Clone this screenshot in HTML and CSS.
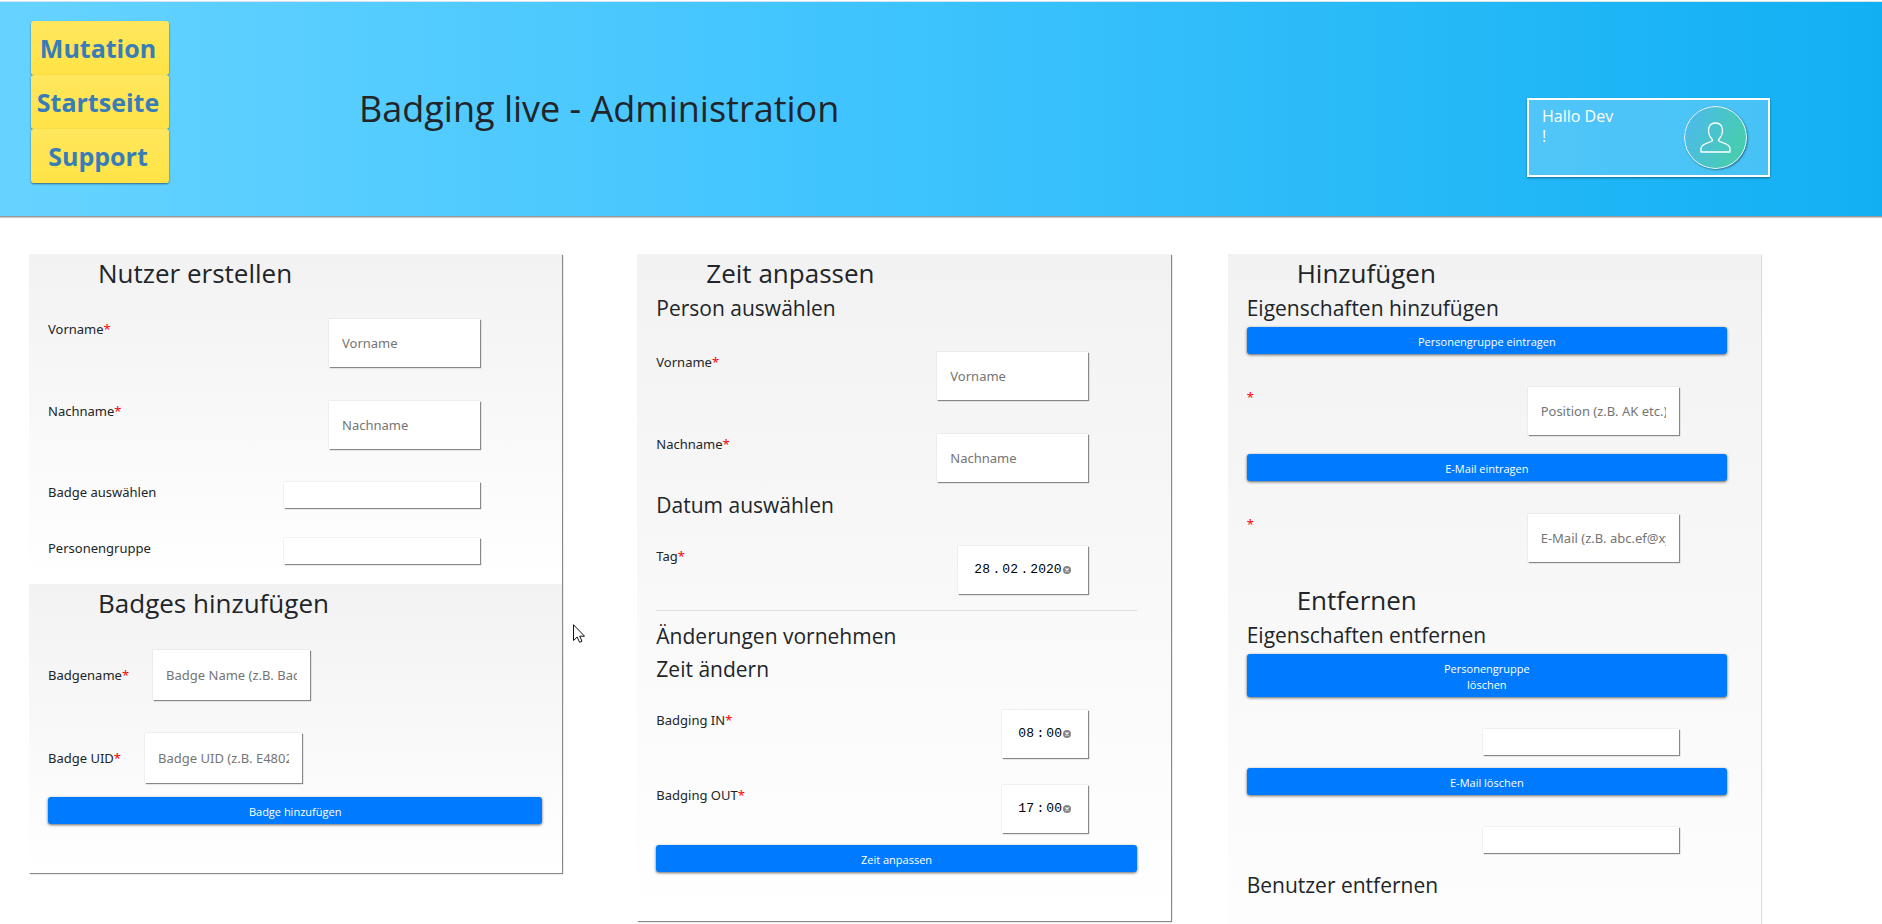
FILE: index.html
```html
<!DOCTYPE html>
<html lang="de">
<head>
<meta charset="utf-8">
<meta name="viewport" content="width=device-width, initial-scale=1">
<title>Badging live - Administration</title>
<link rel="stylesheet" href="styles.css">
</head>
<body>
<header class="header">
  <nav class="nav">
    <a class="nav-link" href="#mutation">Mutation</a>
    <a class="nav-link" href="#start">Startseite</a>
    <a class="nav-link" href="#support">Support</a>
  </nav>
  <h1 class="page-title">Badging live - Administration</h1>
  <div class="user">
    <p class="user-greeting">Hallo Dev !</p>
    <svg class="user-avatar" viewBox="0 0 63 63" aria-hidden="true">
      <defs>
        <linearGradient id="avatar-fill" x1="0" y1="0.3" x2="1" y2="0.7">
          <stop offset="0" stop-color="#4dbaea"/>
          <stop offset="1" stop-color="#46cfa8"/>
        </linearGradient>
      </defs>
      <circle cx="31.5" cy="31.5" r="31" fill="url(#avatar-fill)" stroke="#fff" stroke-width="1"/>
      <path d="M28.500 34.500C28.500 32.500 24.500 31 24.500 25C24.500 20 27 17 31.500 17C36 17 38.500 20 38.500 25C38.500 31 34.500 32.500 34.500 34.500C34.500 36.500 46 36.500 46 42.500V46H17V42.500C17 36.500 28.500 36.500 28.500 34.500Z" fill="none" stroke="#fff" stroke-width="1.300" stroke-linejoin="round"/>
    </svg>
  </div>
</header>

<main class="board">
  <div class="column">
    <form class="card card-create">
      <h2 class="card-title">Nutzer erstellen</h2>
      <div class="field">
        <label for="new-first">Vorname<span class="required">*</span></label>
        <input class="text-input" id="new-first" type="text" placeholder="Vorname">
      </div>
      <div class="field">
        <label for="new-last">Nachname<span class="required">*</span></label>
        <input class="text-input" id="new-last" type="text" placeholder="Nachname">
      </div>
      <div class="field field-select">
        <label for="new-badge">Badge auswählen</label>
        <select class="select" id="new-badge"></select>
      </div>
      <div class="field field-select">
        <label for="new-group">Personengruppe</label>
        <select class="select" id="new-group"></select>
      </div>
    </form>
    <form class="card card-badges">
      <h2 class="card-title">Badges hinzufügen</h2>
      <div class="field field-inline">
        <label for="badge-name">Badgename<span class="required">*</span></label>
        <input class="text-input" id="badge-name" type="text" placeholder="Badge Name (z.B. Badge 12)">
      </div>
      <div class="field field-inline">
        <label for="badge-uid">Badge UID<span class="required">*</span></label>
        <input class="text-input" id="badge-uid" type="text" placeholder="Badge UID (z.B. E4802F)">
      </div>
      <button class="button" type="button">Badge hinzufügen</button>
    </form>
  </div>

  <form class="card card-time">
    <h2 class="card-title">Zeit anpassen</h2>
    <h3 class="section-title">Person auswählen</h3>
    <div class="field">
      <label for="time-first">Vorname<span class="required">*</span></label>
      <input class="text-input" id="time-first" type="text" placeholder="Vorname">
    </div>
    <div class="field">
      <label for="time-last">Nachname<span class="required">*</span></label>
      <input class="text-input" id="time-last" type="text" placeholder="Nachname">
    </div>
    <h3 class="section-title">Datum auswählen</h3>
    <div class="field field-time">
      <label for="day">Tag<span class="required">*</span></label>
      <div class="segments">
        <input class="segment" id="day" type="text" inputmode="numeric" value="28"><span class="separator">.</span><input class="segment" type="text" inputmode="numeric" aria-label="Monat" value="02"><span class="separator">.</span><input class="segment segment-year" type="text" inputmode="numeric" aria-label="Jahr" value="2020">
        <button class="clear" type="button" aria-label="Datum löschen"><svg viewBox="0 0 8 8"><circle cx="4" cy="4" r="4" fill="#858585"/><path d="M2.500 2.500L5.500 5.500M5.500 2.500L2.500 5.500" stroke="#fff" stroke-width="1.200"/></svg></button>
      </div>
    </div>
    <hr class="divider">
    <h3 class="section-title">Änderungen vornehmen</h3>
    <h3 class="section-title">Zeit ändern</h3>
    <div class="field field-time">
      <label for="in-hour">Badging IN<span class="required">*</span></label>
      <div class="segments">
        <input class="segment" id="in-hour" type="text" inputmode="numeric" value="08"><span class="separator">:</span><input class="segment" type="text" inputmode="numeric" aria-label="Minute IN" value="00">
        <button class="clear" type="button" aria-label="Zeit IN löschen"><svg viewBox="0 0 8 8"><circle cx="4" cy="4" r="4" fill="#858585"/><path d="M2.500 2.500L5.500 5.500M5.500 2.500L2.500 5.500" stroke="#fff" stroke-width="1.200"/></svg></button>
      </div>
    </div>
    <div class="field field-time">
      <label for="out-hour">Badging OUT<span class="required">*</span></label>
      <div class="segments">
        <input class="segment" id="out-hour" type="text" inputmode="numeric" value="17"><span class="separator">:</span><input class="segment" type="text" inputmode="numeric" aria-label="Minute OUT" value="00">
        <button class="clear" type="button" aria-label="Zeit OUT löschen"><svg viewBox="0 0 8 8"><circle cx="4" cy="4" r="4" fill="#858585"/><path d="M2.500 2.500L5.500 5.500M5.500 2.500L2.500 5.500" stroke="#fff" stroke-width="1.200"/></svg></button>
      </div>
    </div>
    <button class="button" type="button">Zeit anpassen</button>
  </form>

  <form class="card card-manage">
    <h2 class="card-title">Hinzufügen</h2>
    <h3 class="section-title">Eigenschaften hinzufügen</h3>
    <button class="button" type="button">Personengruppe eintragen</button>
    <div class="field">
      <label for="add-group"><span class="required">*</span></label>
      <input class="text-input" id="add-group" type="text" placeholder="Position (z.B. AK etc.)">
    </div>
    <button class="button" type="button">E-Mail eintragen</button>
    <div class="field">
      <label for="add-mail"><span class="required">*</span></label>
      <input class="text-input" id="add-mail" type="text" placeholder="E-Mail (z.B. abc.ef@xyz.ch)">
    </div>
    <h2 class="card-title">Entfernen</h2>
    <h3 class="section-title">Eigenschaften entfernen</h3>
    <button class="button" type="button">Personengruppe<br>löschen</button>
    <div class="field field-select">
      <select class="select" aria-label="Personengruppe löschen"></select>
    </div>
    <button class="button" type="button">E-Mail löschen</button>
    <div class="field field-select">
      <select class="select" aria-label="E-Mail löschen"></select>
    </div>
    <h3 class="section-title">Benutzer entfernen</h3>
  </form>
</main>

<svg class="pointer" viewBox="0 0 12 19" aria-hidden="true">
  <path d="M0.500 0.700V16.500L4.200 13L6.600 18.300L9 17.200L6.700 12.200H11.500Z" fill="#fff" stroke="#111" stroke-width="1"/>
</svg>
</body>
</html>
```
FILE: styles.css
```css
* {
  box-sizing: border-box;
}

body {
  margin: 0;
  background: #fff;
  color: #212529;
  font-family: "Noto Sans", "Open Sans", sans-serif;
  font-size: 13px;
  line-height: 20px;
}

h1,
h2,
h3,
p {
  margin: 0;
  font-weight: 400;
}

h1,
h2,
h3,
.nav-link,
.user-greeting {
  font-family: "Open Sans", "Noto Sans", sans-serif;
}

input,
select,
button {
  margin: 0;
  border: 0;
  border-radius: 0;
  font: inherit;
}

.header {
  display: flex;
  align-items: flex-start;
  margin-top: 1px;
  padding: 19px 112px 33px 31px;
  border-top: 1px solid #d5e4ea;
  border-bottom: 1px solid #999;
  background: linear-gradient(90deg, #66d3ff, #40c4fe 45%, #12b0f3);
  box-shadow: 0 1px 1px #ccc;
}

.nav {
  display: flex;
  flex-direction: column;
  width: 138px;
}

.nav-link {
  padding-right: 4px;
  border-radius: 3px;
  background: linear-gradient(#ffe75e, #ffe345);
  box-shadow: 0 1px 2px rgba(0, 0, 0, 0.5);
  color: #387cb8;
  font-size: 25px;
  font-weight: 700;
  line-height: 54px;
  text-align: center;
  text-decoration: none;
}

.page-title {
  margin: 64px 0 0 190px;
  font-size: 36px;
  line-height: 48px;
}

.user {
  display: flex;
  justify-content: space-between;
  width: 243px;
  margin: 77px 0 0 auto;
  padding: 6px 21px 6px 13px;
  border: 2px solid #fff;
  background: rgba(255, 255, 255, 0.21);
  box-shadow: 0 1px 2px rgba(0, 0, 0, 0.4);
  color: #fff;
}

.user-greeting {
  width: 74px;
  font-size: 16px;
}

.user-avatar {
  width: 63px;
  height: 63px;
  border-radius: 50%;
  box-shadow: 1px 1px 2px rgba(0, 0, 0, 0.4);
}

.board {
  display: grid;
  grid-template-columns: repeat(3, 1fr);
  align-items: start;
  padding: 37px 121px 0 29px;
}

.column {
  margin-right: 44px;
}

.card {
  padding: 0 20px 49px 19px;
  background: linear-gradient(#f2f2f2, #fff);
  box-shadow: 1px 1px 1px #888;
}

.card-create {
  padding-bottom: 16px;
}

.card-time,
.card-manage {
  padding-right: 34px;
}

.card-time {
  margin: 0 13px 0 31px;
}

.card-manage {
  margin-left: 44px;
  padding-bottom: 140px;
  box-shadow: 1px 1px 1px #ddd;
}

.card-title {
  padding-left: 50px;
  font-size: 26px;
  line-height: 38px;
}

.section-title {
  font-size: 21px;
  line-height: 33px;
}

.required {
  color: #f00;
}

.field {
  display: flex;
  justify-content: space-between;
  max-width: 432px;
  padding: 27px 0 7px;
}

.field-select {
  padding: 26px 0 4px;
}

.field-inline {
  align-items: center;
  justify-content: flex-start;
  gap: 24px;
  padding-bottom: 6px;
}

.field-time {
  padding: 24px 0 3px;
}

.text-input {
  width: 151px;
  height: 48px;
  padding: 0 13px;
  background: #fff;
  box-shadow: 1px 1px 1px #888, 0 0 1px #bbb;
}

.text-input::placeholder {
  color: #757575;
  opacity: 1;
}

.field-inline .text-input {
  width: 157px;
  height: 50px;
}

.select {
  width: 196px;
  height: 26px;
  margin-left: auto;
  background: #fff;
  box-shadow: 1px 1px 1px #888, 0 0 1px #bbb;
  appearance: none;
}

.segments {
  display: flex;
  align-items: center;
  height: 48px;
  padding: 0 17px 0 16px;
  background: #fff;
  box-shadow: 1px 1px 1px #888, 0 0 1px #bbb;
  font-family: "Liberation Mono", monospace;
}

.segment {
  width: 16px;
  padding: 0;
  background: none;
  color: #000;
}

.segment-year {
  width: 32px;
}

.separator {
  width: 12px;
  color: #000;
  text-align: center;
}

.clear {
  display: flex;
  margin-left: 1px;
  padding: 0;
  background: none;
}

.clear svg {
  width: 8px;
  height: 8px;
}

.divider {
  height: 1px;
  margin: 13px 0 9px;
  border: 0;
  background: #dedede;
}

.button {
  display: block;
  width: 100%;
  padding: 7px 0 4px;
  border-radius: 3px;
  background: #007bff;
  box-shadow: 0 1px 3px rgba(0, 0, 0, 0.6);
  color: #fff;
  font-family: "Open Sans", "Noto Sans", sans-serif;
  font-size: 11px;
  line-height: 16px;
}

.card-badges .card-title {
  padding-bottom: 1px;
}

.card-badges .button {
  margin-top: 8px;
}

.card-time .button {
  margin-top: 9px;
}

.card-manage .section-title {
  padding-bottom: 2px;
}

.card-manage .field {
  padding: 33px 0 19px;
}

.card-manage .field-select {
  padding: 32px 0 13px;
}

.field-select + .section-title {
  padding-top: 3px;
}

.pointer {
  position: absolute;
  top: 624px;
  left: 573px;
  width: 12px;
  height: 19px;
}
```
